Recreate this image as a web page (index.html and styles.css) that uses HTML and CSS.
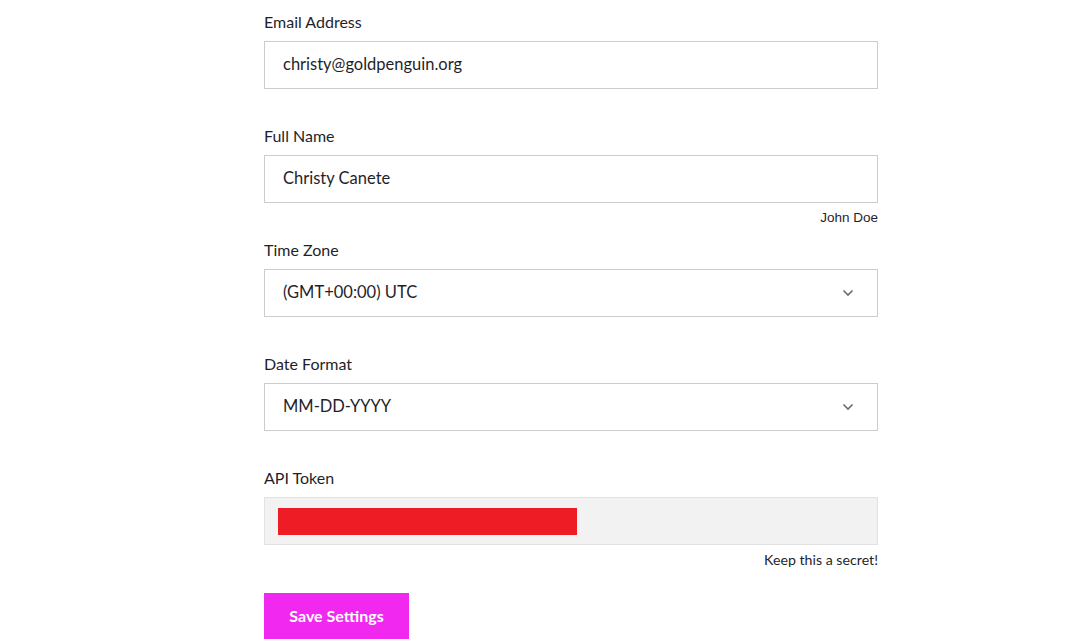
FILE: index.html
```html
<!DOCTYPE html>
<html>
<head>
<meta charset="utf-8">
<link rel="stylesheet" href="styles.css">
</head>
<body>
<form class="settings">
  <div class="field">
    <label class="label">Email Address</label>
    <div class="input">christy@goldpenguin.org</div>
  </div>
  <div class="field has-hint">
    <label class="label">Full Name</label>
    <div class="input">Christy Canete</div>
    <div class="hint hint-arial">John Doe</div>
  </div>
  <div class="field">
    <label class="label">Time Zone</label>
    <div class="input select">
      <span>(GMT+00:00) UTC</span>
      <svg class="chev" width="12" height="8" viewBox="0 0 12 8"><path d="M1.5 1.5 L6 6 L10.5 1.5" fill="none" stroke="#6b6b6b" stroke-width="1.6"/></svg>
    </div>
  </div>
  <div class="field">
    <label class="label">Date Format</label>
    <div class="input select">
      <span>MM-DD-YYYY</span>
      <svg class="chev" width="12" height="8" viewBox="0 0 12 8"><path d="M1.5 1.5 L6 6 L10.5 1.5" fill="none" stroke="#6b6b6b" stroke-width="1.6"/></svg>
    </div>
  </div>
  <div class="field token-field">
    <label class="label">API Token</label>
    <div class="input token"><span class="redact"></span></div>
    <div class="hint">Keep this a secret!</div>
  </div>
  <button type="button" class="save">Save Settings</button>
</form>
</body>
</html>
```
FILE: styles.css
```css
html, body {
  margin: 0;
  padding: 0;
  background: #ffffff;
}
body {
  font-family: Lato, "Noto Sans", sans-serif;
  color: #1f1f2b;
  overflow: hidden;
}
.settings {
  width: 614px;
  margin-left: 264px;
  padding-top: 12px;
  display: flex;
  flex-direction: column;
}
.field {
  display: flex;
  flex-direction: column;
  margin-bottom: 37px;
}
.field.has-hint {
  margin-bottom: 12px;
}
.field.token-field {
  margin-bottom: 23px;
}
.label {
  font-size: 16px;
  line-height: 20px;
  margin-bottom: 9px;
}
.input {
  box-sizing: border-box;
  height: 48px;
  border: 1px solid #cccccc;
  padding: 0 18px 3px;
  font-size: 16.5px;
  display: flex;
  align-items: center;
}
.select {
  justify-content: space-between;
  padding-right: 23px;
}
.chev {
  display: block;
  margin-top: 3px;
}
.token {
  background: #f2f2f2;
  border-color: #e2e2e2;
  padding: 0 13px;
}
.redact {
  display: block;
  width: 299px;
  height: 27px;
  background: #ee1c25;
}
.hint {
  font-size: 14.2px;
  line-height: 20px;
  margin-top: 5px;
  text-align: right;
}
.hint-arial {
  font-family: "Liberation Sans", Arial, sans-serif;
  font-size: 13.5px;
}
.save {
  align-self: flex-start;
  width: 145px;
  height: 46px;
  border: none;
  background: #f028f0;
  color: #ffffff;
  font-family: Lato, "Noto Sans", sans-serif;
  font-weight: 700;
  font-size: 16px;
  padding: 0 0 2px;
}
```
